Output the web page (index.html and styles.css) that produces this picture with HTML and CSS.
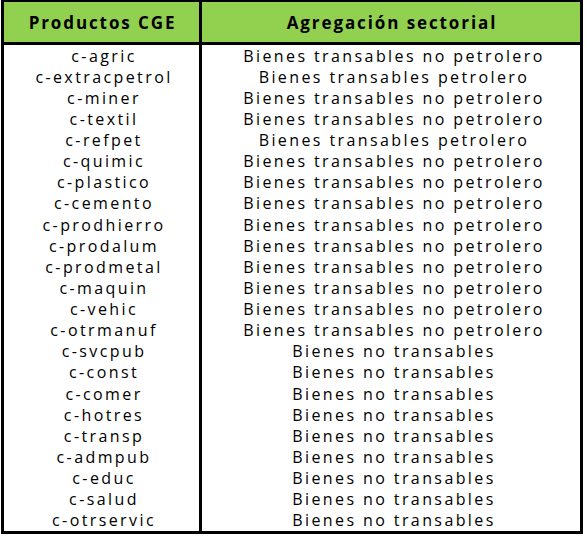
FILE: index.html
```html
<!DOCTYPE html>
<html lang="es">
<head>
<meta charset="utf-8">
<link rel="stylesheet" href="styles.css">
</head>
<body>
<div class="tbl">
  <div class="row head">
    <div class="c1">Productos CGE</div>
    <div class="c2">Agregación sectorial</div>
  </div>
  <div class="body">
    <div class="row"><div class="c1">c-agric</div><div class="c2">Bienes transables no petrolero</div></div>
    <div class="row"><div class="c1">c-extracpetrol</div><div class="c2">Bienes transables petrolero</div></div>
    <div class="row"><div class="c1">c-miner</div><div class="c2">Bienes transables no petrolero</div></div>
    <div class="row"><div class="c1">c-textil</div><div class="c2">Bienes transables no petrolero</div></div>
    <div class="row"><div class="c1">c-refpet</div><div class="c2">Bienes transables petrolero</div></div>
    <div class="row"><div class="c1">c-quimic</div><div class="c2">Bienes transables no petrolero</div></div>
    <div class="row"><div class="c1">c-plastico</div><div class="c2">Bienes transables no petrolero</div></div>
    <div class="row"><div class="c1">c-cemento</div><div class="c2">Bienes transables no petrolero</div></div>
    <div class="row"><div class="c1">c-prodhierro</div><div class="c2">Bienes transables no petrolero</div></div>
    <div class="row"><div class="c1">c-prodalum</div><div class="c2">Bienes transables no petrolero</div></div>
    <div class="row"><div class="c1">c-prodmetal</div><div class="c2">Bienes transables no petrolero</div></div>
    <div class="row"><div class="c1">c-maquin</div><div class="c2">Bienes transables no petrolero</div></div>
    <div class="row"><div class="c1">c-vehic</div><div class="c2">Bienes transables no petrolero</div></div>
    <div class="row"><div class="c1">c-otrmanuf</div><div class="c2">Bienes transables no petrolero</div></div>
    <div class="row"><div class="c1">c-svcpub</div><div class="c2">Bienes no transables</div></div>
    <div class="row"><div class="c1">c-const</div><div class="c2">Bienes no transables</div></div>
    <div class="row"><div class="c1">c-comer</div><div class="c2">Bienes no transables</div></div>
    <div class="row"><div class="c1">c-hotres</div><div class="c2">Bienes no transables</div></div>
    <div class="row"><div class="c1">c-transp</div><div class="c2">Bienes no transables</div></div>
    <div class="row"><div class="c1">c-admpub</div><div class="c2">Bienes no transables</div></div>
    <div class="row"><div class="c1">c-educ</div><div class="c2">Bienes no transables</div></div>
    <div class="row"><div class="c1">c-salud</div><div class="c2">Bienes no transables</div></div>
    <div class="row"><div class="c1">c-otrservic</div><div class="c2">Bienes no transables</div></div>
  </div>
</div>
</body>
</html>
```
FILE: styles.css
```css
html, body {
  margin: 0;
  padding: 0;
  background: #ffffff;
}
body {
  font-family: "Open Sans", "Noto Sans", sans-serif;
  color: #000;
}
.tbl {
  margin-left: 1px;
  width: 576px;
  border: 3px solid #000;
  border-top-width: 2px;
}
.row {
  display: grid;
  grid-template-columns: 198px 1fr;
}
.row > div {
  display: flex;
  align-items: center;
  justify-content: center;
  white-space: nowrap;
}
.c1 {
  border-right: 3px solid #000;
}
.head {
  background: #92d050;
  height: 40px;
  border-bottom: 3px solid #000;
  font-weight: 700;
  font-size: 17px;
  letter-spacing: 1.9px;
}
.head .c1 {
  padding-left: 2px;
}
.head .c2 {
  padding-left: 2px;
}
.body .row {
  height: 21.13px;
  font-size: 16px;
  letter-spacing: 2.4px;
  line-height: 1;
}
.body .c1 {
  padding-left: 5px;
}
.body .c2 {
  padding-left: 6px;
}
```
